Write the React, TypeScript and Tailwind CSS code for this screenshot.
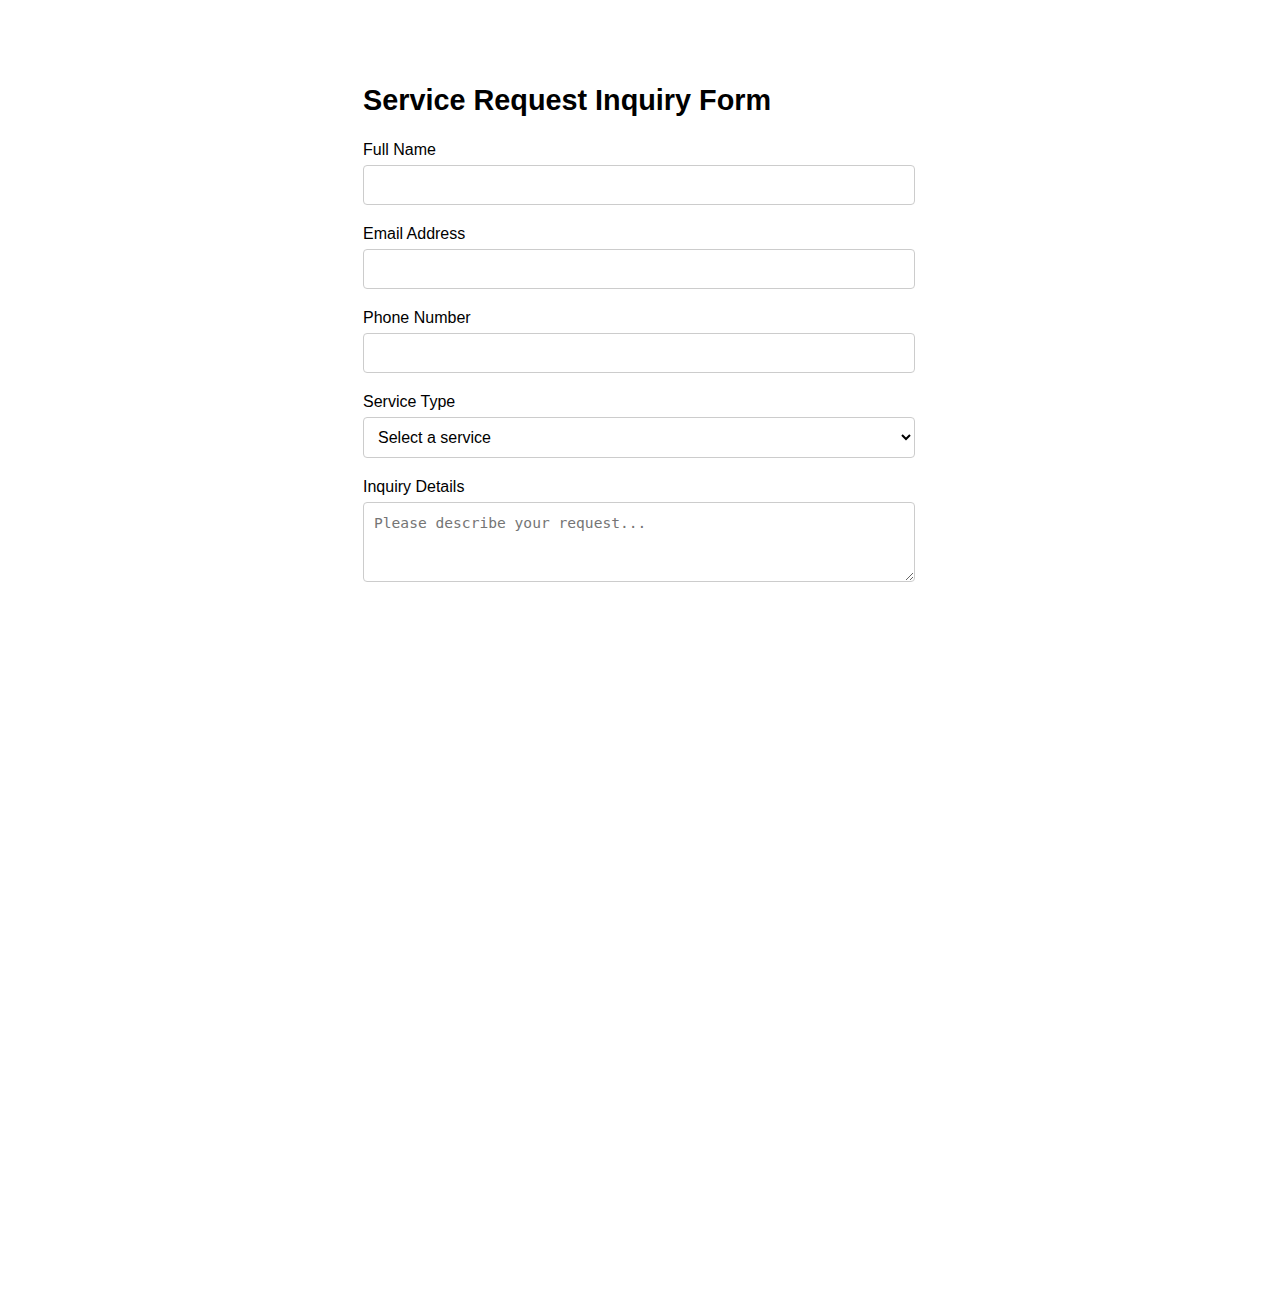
import { useState } from 'react';

const fieldClass =
  'block w-full h-10 rounded border border-[#ccc] bg-white px-2.5 text-base text-black outline-none';

function Field({ label, id, type = 'text' }: { label: string; id: string; type?: string }) {
  return (
    <div className="mb-5">
      <label htmlFor={id} className="mb-1.5 block text-base leading-[18px] text-black">
        {label}
      </label>
      <input id={id} type={type} className={fieldClass} />
    </div>
  );
}

export default function App() {
  const [service, setService] = useState('');

  return (
    <div className="min-h-[1300px] bg-white font-['Liberation_Sans',Arial,sans-serif] text-black">
      <div className="mx-auto w-[552px] pt-[82px]">
        <h1 className="mb-[23px] text-[28.8px] font-bold leading-9">Service Request Inquiry Form</h1>

        <form onSubmit={(e) => e.preventDefault()}>
          <Field label="Full Name" id="name" />
          <Field label="Email Address" id="email" type="email" />
          <Field label="Phone Number" id="phone" type="tel" />

          <div className="mb-5">
            <label htmlFor="service" className="mb-1.5 block text-base leading-[18px]">
              Service Type
            </label>
            <select
              id="service"
              value={service}
              onChange={(e) => setService(e.target.value)}
              className="block h-[41px] w-full rounded border border-[#ccc] bg-white pl-2.5 pr-2 text-base text-black outline-none"
            >
              <option value="">Select a service</option>
              <option value="consulting">Consulting</option>
              <option value="installation">Installation</option>
              <option value="maintenance">Maintenance</option>
              <option value="support">Support</option>
            </select>
          </div>

          <div className="mb-5">
            <label htmlFor="details" className="mb-1.5 block text-base leading-[18px]">
              Inquiry Details
            </label>
            <textarea
              id="details"
              placeholder="Please describe your request..."
              className="block h-20 w-full rounded border border-[#ccc] bg-white px-2.5 pt-2.5 font-['DejaVu_Sans_Mono',monospace] text-[14.6px] leading-5 text-black outline-none placeholder:text-[#757575]"
            />
          </div>
        </form>
      </div>
    </div>
  );
}
